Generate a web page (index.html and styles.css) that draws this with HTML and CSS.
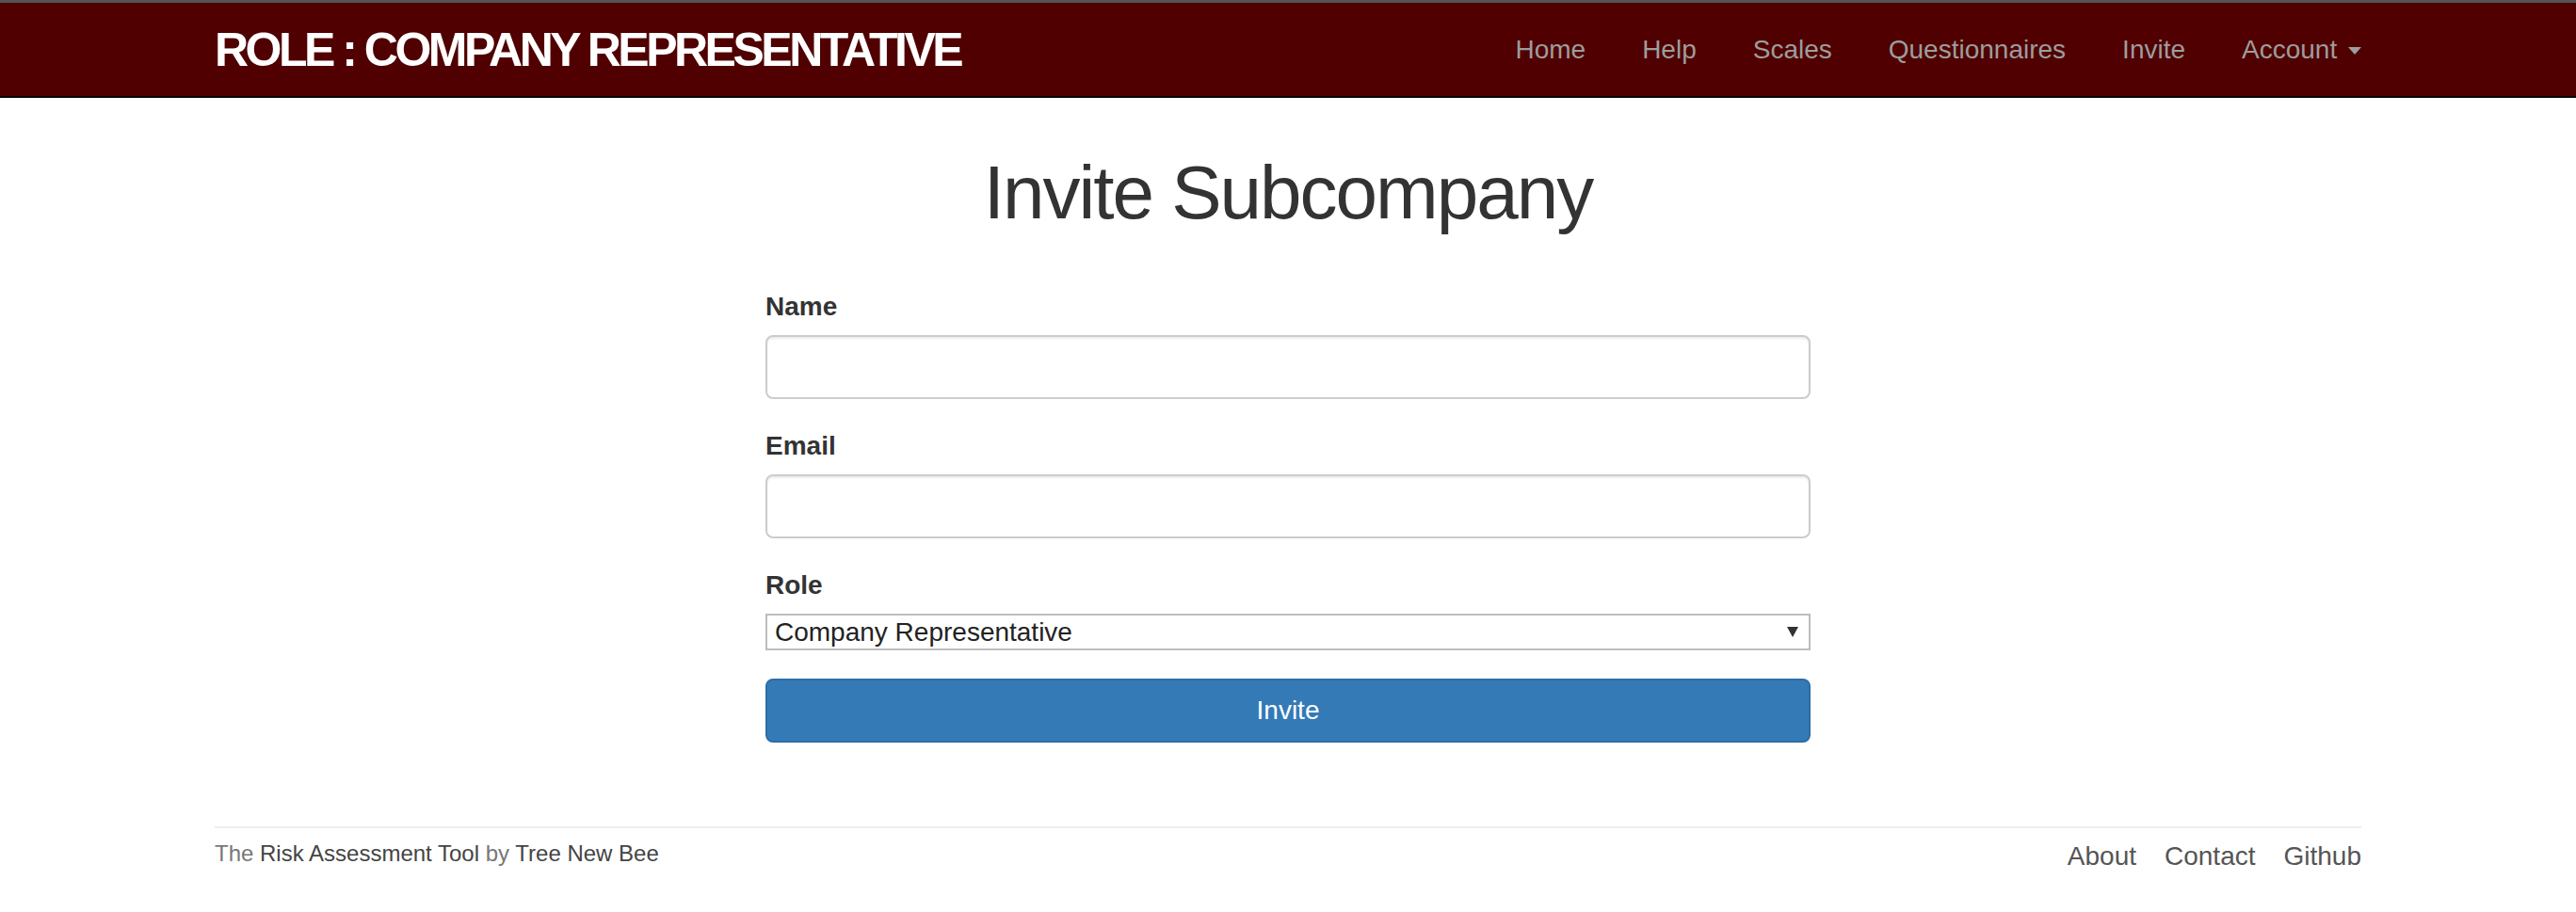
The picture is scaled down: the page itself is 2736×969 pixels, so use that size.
FILE: index.html
```html
<!DOCTYPE html>
<html lang="en">
<head>
<meta charset="utf-8">
<title>Invite Subcompany</title>
<link rel="stylesheet" href="styles.css">
</head>
<body>
<nav class="navbar">
  <div class="container nav-inner">
    <a class="brand" href="#">ROLE : COMPANY REPRESENTATIVE</a>
    <ul class="nav-links">
      <li><a href="#">Home</a></li>
      <li><a href="#">Help</a></li>
      <li><a href="#">Scales</a></li>
      <li><a href="#">Questionnaires</a></li>
      <li><a href="#">Invite</a></li>
      <li><a href="#">Account <span class="caret"></span></a></li>
    </ul>
  </div>
</nav>

<main class="container main">
  <h1 class="title">Invite Subcompany</h1>
  <form class="invite-form">
    <div class="form-group">
      <label class="field-label" for="name">Name</label>
      <input class="field-input" id="name" type="text">
    </div>
    <div class="form-group">
      <label class="field-label" for="email">Email</label>
      <input class="field-input" id="email" type="email">
    </div>
    <div class="form-group">
      <label class="field-label" for="role">Role</label>
      <div class="select-wrap">
        <select class="field-select" id="role">
          <option>Company Representative</option>
        </select>
        <span class="select-arrow"></span>
      </div>
    </div>
    <button class="btn-invite" type="button">Invite</button>
  </form>
</main>

<footer class="container footer">
  <div class="footer-row">
    <p class="credit">The <a href="#">Risk Assessment Tool</a> by <a href="#">Tree New Bee</a></p>
    <ul class="footer-links">
      <li><a href="#">About</a></li>
      <li><a href="#">Contact</a></li>
      <li><a href="#">Github</a></li>
    </ul>
  </div>
</footer>
</body>
</html>
```

FILE: styles.css
```css
* { box-sizing: border-box; }

html, body {
  margin: 0;
  padding: 0;
  background: #fff;
}

body {
  font-family: "Liberation Sans", Arial, Helvetica, sans-serif;
  color: #333;
  font-size: 28px;
}

a { text-decoration: none; }

.container {
  width: 2340px;
  margin: 0 auto;
  padding: 0 30px;
}

/* Navbar */
.navbar {
  background: #500000;
  border-top: 3px solid #545454;
  border-bottom: 2px solid #080808;
}

.nav-inner {
  height: 99px;
  display: flex;
  align-items: center;
  justify-content: space-between;
}

.brand {
  color: #fff;
  font-weight: bold;
  font-size: 50px;
  letter-spacing: -3.5px;
  line-height: 1;
}

.nav-links {
  list-style: none;
  margin: 0 -30px 0 0;
  padding: 0;
  display: flex;
}

.nav-links a {
  display: block;
  padding: 0 30px;
  color: #9d9d9d;
  font-size: 28px;
  line-height: 40px;
}

.caret {
  display: inline-block;
  width: 0;
  height: 0;
  margin-left: 4px;
  vertical-align: middle;
  border-top: 8px solid #9d9d9d;
  border-left: 7px solid transparent;
  border-right: 7px solid transparent;
}

/* Main */
.main {
  padding-top: 57px;
}

.title {
  margin: 0;
  text-align: center;
  font-size: 80px;
  font-weight: normal;
  letter-spacing: -2px;
  line-height: 88px;
  color: #333;
}

.invite-form {
  width: 1110px;
  margin: 57px auto 0;
}

.form-group {
  margin-bottom: 30px;
}

.field-label {
  display: block;
  font-weight: bold;
  font-size: 28px;
  line-height: 40px;
  margin-bottom: 10px;
  color: #333;
}

.field-input {
  display: block;
  width: 100%;
  height: 68px;
  border: 2px solid #ccc;
  border-radius: 8px;
  box-shadow: inset 0 2px 2px rgba(0, 0, 0, 0.075);
  font-family: inherit;
  font-size: 28px;
  padding: 0 24px;
  margin: 0;
}

.select-wrap {
  position: relative;
}

.field-select {
  display: block;
  width: 100%;
  height: 39px;
  margin: 0;
  padding: 0 8px;
  border: 2px solid #bdbdbd;
  border-radius: 0;
  background: #fff;
  color: #222;
  font-family: inherit;
  font-size: 28px;
  line-height: 35px;
  -webkit-appearance: none;
  appearance: none;
}

.select-arrow {
  position: absolute;
  right: 13px;
  top: 14px;
  width: 0;
  height: 0;
  border-top: 11px solid #333;
  border-left: 6px solid transparent;
  border-right: 6px solid transparent;
  pointer-events: none;
}

.btn-invite {
  display: block;
  width: 100%;
  height: 68px;
  margin: 0;
  background: #337ab7;
  border: 2px solid #2e6da4;
  border-radius: 8px;
  color: #fff;
  font-family: inherit;
  font-size: 28px;
  line-height: 40px;
}

/* Footer */
.footer {
  margin-top: 89px;
}

.footer-row {
  border-top: 2px solid #eee;
  padding-top: 10px;
  display: flex;
  justify-content: space-between;
  align-items: flex-start;
}

.credit {
  margin: 0;
  font-size: 24px;
  line-height: 34px;
  color: #777;
}

.credit a {
  color: #444;
}

.footer-links {
  list-style: none;
  margin: 0;
  padding: 0;
  display: flex;
  gap: 30px;
}

.footer-links a {
  color: #555;
  font-size: 28px;
  line-height: 40px;
}
```
